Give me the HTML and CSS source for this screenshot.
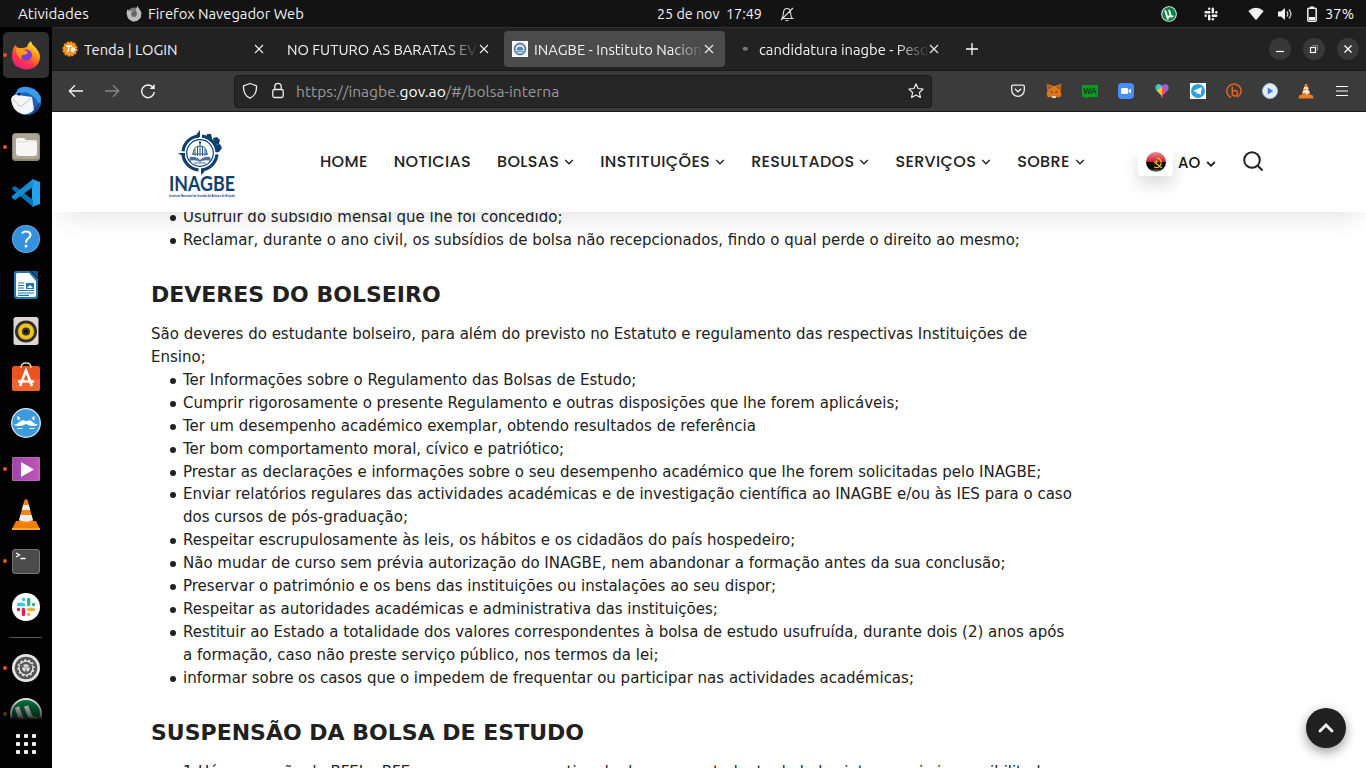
FILE: index.html
```html
<!DOCTYPE html>
<html lang="pt">
<head>
<meta charset="utf-8">
<title>INAGBE - Instituto Nacional de Gestão de Bolsas de Estudo</title>
<link rel="stylesheet" href="styles.css">
</head>
<body>
<header class="topbar">
  <span class="activities">Atividades</span>
  <svg class="app-icon" width="16" height="16" viewBox="0 0 28 28"><circle cx="14" cy="15" r="12.500" fill="#777"/><path d="M2 6l5 3 6-1-3 5 4 4 5-4-2-7 3-6 3 5 4 6-1 9-6 6-8 1-8-5-3-9z" fill="#bcbcbc"/><circle cx="14" cy="14" r="5" fill="#666"/></svg>
  <span class="app-name">Firefox Navegador Web</span>
  <div class="clock"><span class="date">25 de nov</span><span class="time">17:49</span>
    <svg width="16" height="16" viewBox="0 0 16 16" fill="none" stroke="#ddd" stroke-width="1.100"><path d="M2.500 12.500h11c-1.500-1-1.700-2.500-1.900-5.500-.2-3-1.600-4.500-3.600-4.500s-3.400 1.500-3.600 4.500c-.2 3-.4 4.500-1.900 5.500M6.500 14.500h3M2 14L14 2"/></svg>
  </div>
  <div class="status">
    <svg width="16" height="16" viewBox="0 0 16 16"><circle cx="8" cy="8" r="7.800" fill="#fff"/><circle cx="8" cy="8" r="6.900" fill="#0b8043"/><path d="M4 4.300l1.700 4.800q.8 2 2.600 1.500 1.500-.5 1-2.300L8 4M9.400 9.500q.8 1.500 3 .5M5.600 9l1.500 4.500" fill="none" stroke="#fff" stroke-width="1.900"/></svg>
    <svg class="s-slack" width="14" height="14" viewBox="0 0 14 14" fill="#f2f2f2"><rect x="4" y=".5" width="2.400" height="2.400" rx="1.200"/><rect x=".5" y="4" width="5.900" height="2.400" rx="1.200"/><rect x="7.600" y=".5" width="2.400" height="5.900" rx="1.200"/><rect x="11.100" y="4" width="2.400" height="2.400" rx="1.200"/><rect x=".5" y="7.600" width="2.400" height="2.400" rx="1.200"/><rect x="4" y="7.600" width="2.400" height="5.900" rx="1.200"/><rect x="7.600" y="7.600" width="5.900" height="2.400" rx="1.200"/><rect x="7.600" y="11.100" width="2.400" height="2.400" rx="1.200"/></svg>
    <svg class="s-wifi" width="16" height="14" viewBox="0 0 16 14"><path d="M.3 4Q8-2.600 15.700 4L8 13.300z" fill="#f2f2f2"/></svg>
    <svg class="s-vol" width="16" height="14" viewBox="0 0 16 14"><path d="M1 4.500h3L8 1v12L4 9.500H1z" fill="#f2f2f2"/><path d="M9.800 4.500q2 2.500 0 5M12 2.500q3.800 4.500 0 9" fill="none" stroke="#ccc" stroke-width="1.300"/></svg>
    <svg class="s-bat" width="10" height="16" viewBox="0 0 10 16"><path d="M3 .5h4v2H3zM2 11h6v3H2z" fill="#f2f2f2"/><rect x=".8" y="2.300" width="8.400" height="12.900" rx="1" fill="none" stroke="#f2f2f2" stroke-width="1.500"/></svg>
    <span class="pct">37%</span>
  </div>
</header>
<div class="desktop">
<nav class="dock">
  <div class="cell focused running"><svg width="28" height="30" viewBox="0 0 28 30"><defs><linearGradient id="ff" x1=".8" y1="0" x2=".2" y2="1"><stop offset="0" stop-color="#fff44f"/><stop offset=".35" stop-color="#ff980e"/><stop offset=".65" stop-color="#ff3b47"/><stop offset="1" stop-color="#e31587"/></linearGradient></defs><path d="M1 9l2-4 3 3 5 0 4-1q1-4 4-6l1 3 4 4q4 5 4 9-1 12-14 12.500Q0 28 0 16q0-4 1-7z" fill="url(#ff)"/><circle cx="14.500" cy="15" r="5.500" fill="#7a3bd8"/><path d="M4 8q5-1 8 2l4 2q-1 3-5 3-3 0-1 4-6-2-6-11z" fill="#ff9a1a"/></svg></div>
  <div class="cell"><svg width="32" height="32" viewBox="0 0 32 32"><circle cx="17" cy="16" r="14" fill="#1d62b7"/><path d="M8 4q6-4 12-1 8 2 11 10l-1 9q-3-10-12-14-5-2-13 2z" fill="#3c9be8"/><path d="M1 14q2-5 7-4l14 2 2 13q-5 5-12 4Q2 26 1 14z" fill="#f6f6f8"/><path d="M3 14q7 9 9 7l9-8" fill="none" stroke="#b8c0d0"/><circle cx="9" cy="9" r="1.500" fill="#113"/><path d="M22 29q8-3 8-12l-5 6z" fill="#124089"/></svg></div>
  <div class="cell running"><svg width="28" height="28" viewBox="0 0 28 28"><rect width="28" height="28" rx="3.500" fill="#8f8977"/><rect x="1" y="1" width="26" height="25" rx="3" fill="#aaa594"/><path d="M4 7q0-2 2-2h6l2 2h8q3 0 3 3v10q0 3-3 3H7q-3 0-3-3z" fill="#f8f7f5"/><path d="M5 9h8l2-1h8" fill="none" stroke="#d8d5cc"/></svg></div>
  <div class="cell"><svg width="28" height="28" viewBox="0 0 28 28"><path d="M20 0l8 3v22l-8 3z" fill="#24a4ec"/><path d="M0 9l3-2 18 14v7L0 10z" fill="#0072b9"/><path d="M0 19l3 2L21 8V0L0 17z" fill="#168bd2"/></svg></div>
  <div class="cell"><svg width="28" height="28" viewBox="0 0 28 28"><circle cx="14" cy="14" r="14" fill="#6db6ef"/><circle cx="14" cy="14" r="13.200" fill="#3591dc"/><path d="M10 8.500q1-2 4-2 4.500 0 4.500 3.500 0 2-2.500 3.700-2 1.300-2 4" fill="none" stroke="#fff" stroke-width="2"/><circle cx="14" cy="21" r="1.500" fill="#fff"/></svg></div>
  <div class="cell"><svg width="26" height="28" viewBox="0 0 26 28"><path d="M3 0h14l8 8v17q0 3-3 3H4q-3 0-3-3V2q0-2 2-2z" fill="#1c79ae"/><path d="M4 2h12l7 8v14q0 2-2 2H5q-2 0-2-2V3z" fill="#fff"/><path d="M18 0h6q1 0 1 1v6z" fill="#0c5a8c"/><path d="M5 12h6M5 14.500h6M5 17h6M5 19.500h16M5 22h16M5 24.300h11" stroke="#1c79ae" stroke-width="1.200"/><path d="M13 12h8v6h-8z" fill="#1c79ae"/><path d="M14 17l3-3 3 3z" fill="#fff"/></svg></div>
  <div class="cell"><svg width="26" height="28" viewBox="0 0 26 28"><rect x=".5" width="25" height="28" rx="2.500" fill="#dcd8cf"/><circle cx="13" cy="14.500" r="11" fill="#282828"/><circle cx="13" cy="14.500" r="9.300" fill="#444"/><circle cx="13" cy="14.500" r="8" fill="#f5c211"/><circle cx="13" cy="14.500" r="4" fill="#333"/><circle cx="13" cy="14.500" r="2" fill="#111"/></svg></div>
  <div class="cell"><svg width="28" height="30" viewBox="0 0 28 30"><rect y="4" width="28" height="25" rx="2.500" fill="#e95420"/><path d="M0 17h28v9q0 3-3 3H3q-3 0-3-3z" fill="#f0642f"/><path d="M9 6q0-5 5-5t5 5" fill="none" stroke="#e8d4a8" stroke-width="1.600"/><path d="M8 24l6-15.500L20 24M6 19.500h16" fill="none" stroke="#fff" stroke-width="2.600"/></svg></div>
  <div class="cell"><svg width="30" height="30" viewBox="0 0 30 30"><circle cx="15" cy="15" r="14.300" fill="#3c9bdc" stroke="#d9e9f5" stroke-width="1.300"/><path d="M3 16.500q3 0 6-3 3-2.500 6 0 3-2.500 6 0 3 3 6 3-2 2-5 1.500-4 0-7-2-3 2-7 2-3 .5-5-1.500z" fill="#fff"/><path d="M7 8.500v3.500l2-1.500zM23 8.500v3.500l-2-1.500zM6.500 20.500h5M18.500 20.500h5" fill="#fff" stroke="#fff"/></svg></div>
  <div class="cell running"><svg width="28" height="24" viewBox="0 0 28 24"><defs><linearGradient id="vp"><stop offset="0" stop-color="#9c45a8"/><stop offset="1" stop-color="#c257b6"/></linearGradient></defs><rect width="28" height="24" rx="2.500" fill="url(#vp)" stroke="#d489cf" stroke-width=".7"/><path d="M9 5l13 7.500L9 20z" fill="#fff"/></svg></div>
  <div class="cell"><svg width="28" height="32" viewBox="0 0 28 32"><path d="M4 22h20l4 8H0z" fill="#f07c00"/><path d="M0 29h28v2H0z" fill="#ffa331"/><path d="M12.500 1q1.500-1.500 3 0l6 22q-7.500 5-15 0z" fill="#f48511"/><path d="M11.200 6h5.600l1.400 5h-8.400zM8.500 16h11l1.400 5q-7 3.500-13.800 0z" fill="#ececec"/></svg></div>
  <div class="cell running"><svg width="28" height="25" viewBox="0 0 28 25"><rect x=".5" y=".5" width="27" height="24" rx="2.500" fill="#4b4b4b" stroke="#777"/><path d="M4 4l3.500 2L4 8M8.500 9.500h5" fill="none" stroke="#fff" stroke-width="1.300"/></svg></div>
  <div class="cell"><svg width="28" height="28" viewBox="0 0 28 28"><circle cx="14" cy="14" r="14" fill="#fff"/><g fill="none" stroke-width="3.400" stroke-linecap="round"><path d="M11.500 6.500h.2M6.500 11.500h5" stroke="#36c5f0"/><path d="M16.700 6.500v5M21.500 11.500h.1" stroke="#2eb67d"/><path d="M16.700 16.500h4.800M16.700 21.300v.1" stroke="#ecb22e"/><path d="M11.500 16.500v5M6.500 16.500h.1" stroke="#e01e5a"/></g></svg></div>
  <hr class="dock-sep">
  <div class="cell running"><svg width="28" height="28" viewBox="0 0 28 28"><circle cx="14" cy="14" r="14" fill="#e4e4e4"/><circle cx="14" cy="14" r="10" fill="none" stroke="#555" stroke-width="2.500"/><circle cx="14" cy="14" r="8.500" fill="none" stroke="#555" stroke-width="2" stroke-dasharray="2.200 2.250"/><circle cx="14" cy="14" r="5" fill="none" stroke="#555" stroke-width="2.500"/><circle cx="14" cy="14" r="2" fill="#bbb"/><path d="M14 16v5M12 13l-4.500-2.700M16 13l4.500-2.700" stroke="#666" stroke-width="1.500"/></svg></div>
  <div class="cell running faded"><svg width="32" height="32" viewBox="0 0 32 32"><circle cx="16" cy="16" r="15" fill="#06713c" stroke="#ddd" stroke-width="2"/><path d="M7 9l3 9q3 6 8 4M16 8l4 10q2 4 8 3" fill="none" stroke="#ddd" stroke-width="4.500"/></svg></div>
  <div class="apps"><i></i><i></i><i></i><i></i><i></i><i></i><i></i><i></i><i></i></div>
</nav>
<main class="window">
  <div class="tabs">
    <div class="tab"><svg class="fav" width="16" height="16" viewBox="0 0 16 16"><circle cx="8" cy="8" r="6.800" fill="#f7941d"/><circle cx="8" cy="8" r="6.800" fill="none" stroke="#f7941d" stroke-width="1.800" stroke-dasharray="2.200 1.360"/><path d="M4 5h6M7 5l-1 6M9.500 9h3q0-2-1.500-2t-1.500 2 2.500 1.700" fill="none" stroke="#fff" stroke-width="1.500"/></svg><span class="title">Tenda | LOGIN</span><svg width="10" height="10" viewBox="0 0 10 10"><path d="M1 1l8 8M9 1L1 9" stroke="#eee" stroke-width="1.100"/></svg></div>
    <div class="tab"><span class="title fade">NO FUTURO AS BARATAS EV</span><svg width="10" height="10" viewBox="0 0 10 10"><path d="M1 1l8 8M9 1L1 9" stroke="#eee" stroke-width="1.100"/></svg></div>
    <div class="tab active"><svg class="fav" width="16" height="16" viewBox="0 0 16 16"><path d="M0 0h16v16H0z" fill="#fff"/><circle cx="8" cy="8" r="5.500" fill="#dbe6f0" stroke="#5b83ab" stroke-width="1.800"/><path d="M5 9q0-3 3-3t3 3zM5 10.500h6" fill="#5b83ab" stroke="#5b83ab" stroke-width=".8"/></svg><span class="title fade">INAGBE - Instituto Nacion</span><svg width="10" height="10" viewBox="0 0 10 10"><path d="M1 1l8 8M9 1L1 9" stroke="#eee" stroke-width="1.100"/></svg></div>
    <div class="tab"><svg class="fav" width="16" height="16" viewBox="0 0 16 16"><ellipse cx="8.300" cy="7.700" rx="2.600" ry="2" fill="#777"/></svg><span class="title fade">candidatura inagbe - Pesq</span><svg width="10" height="10" viewBox="0 0 10 10"><path d="M1 1l8 8M9 1L1 9" stroke="#eee" stroke-width="1.100"/></svg></div>
    <svg class="plus" width="12" height="12" viewBox="0 0 12 12"><path d="M6 0v12M0 6h12" stroke="#fff" stroke-width="1.300"/></svg>
    <div class="controls">
      <span><svg width="10" height="10" viewBox="0 0 10 10"><path d="M1 7.500h8" stroke="#fff" stroke-width="1.200"/></svg></span>
      <span><svg width="10" height="10" viewBox="0 0 10 10" fill="none"><path d="M3.500 1.500h5v5" stroke="#888"/><rect x="1.500" y="3.500" width="5" height="5" stroke="#fff" stroke-width="1.200"/></svg></span>
      <span><svg width="10" height="10" viewBox="0 0 10 10"><path d="M1.500 1.500l7 7M8.500 1.500l-7 7" stroke="#fff" stroke-width="1.300"/></svg></span>
    </div>
  </div>
  <div class="toolbar">
    <span class="tool"><svg width="16" height="16" viewBox="0 0 16 16" fill="none" stroke="#f5f5f5" stroke-width="1.300"><path d="M15 8H1.500M7 2.300L1.300 8 7 13.700"/></svg></span>
    <span class="tool"><svg width="16" height="16" viewBox="0 0 16 16" fill="none" stroke="#868686" stroke-width="1.300"><path d="M1 8h13.500M9 2.300L14.700 8 9 13.700"/></svg></span>
    <span class="tool"><svg width="16" height="16" viewBox="0 0 16 16" fill="none" stroke="#f5f5f5" stroke-width="1.400"><path d="M14.300 9A6.300 6.300 0 1 1 12.600 4"/><path d="M14.700 1v5H9.700z" fill="#f5f5f5" stroke="none"/></svg></span>
    <div class="url">
      <svg width="16" height="18" viewBox="0 0 16 18" fill="none" stroke="#eee" stroke-width="1.300"><path d="M8 1.500l6.500 2.300c.3 6-1.500 10-6.500 12.400C3 13.800 1.200 9.800 1.500 3.800z" stroke-linejoin="round"/></svg>
      <svg class="lock" width="12" height="17" viewBox="0 0 12 17" fill="none" stroke="#eee" stroke-width="1.300"><rect x=".8" y="7.500" width="10.400" height="8" rx="1.500"/><path d="M2.800 7.500V4.500a3.200 3.200 0 0 1 6.400 0v3"/></svg>
      <span class="addr">https://inagbe.<b>gov.ao</b>/#/bolsa-interna</span>
      <svg class="star" width="16" height="16" viewBox="0 0 16 16" fill="none" stroke="#eee" stroke-width="1.200" stroke-linejoin="round"><path d="M8 .9l2.100 4.600 5 .6-3.700 3.400 1 5L8 12l-4.400 2.500 1-5L.9 6.100l5-.6z"/></svg>
    </div>
    <div class="exts">
      <span class="tool"><svg width="14" height="14" viewBox="0 0 14 14" fill="none" stroke="#eee" stroke-width="1.300"><path d="M2 1.200h10q1.300 0 1.300 1.300V6A6.300 6.300 0 0 1 .7 6V2.500Q.7 1.200 2 1.200z"/><path d="M3.800 4.800L7 7.800l3.200-3"/></svg></span>
      <span class="tool"><svg width="16" height="16" viewBox="0 0 16 16"><path d="M.5.500L7 3h2L15.500.5l-1 7.500 1 3.500-1.500 3-3-.8-1.500 1.500h-3L5 13.700l-3 .8-1.500-3 1-3.500z" fill="#d9771f"/><path d="M1 1l5 3.500-3.500 2.300zM15 1l-5 3.500 3.500 2.300z" fill="#a9581c"/><path d="M6 13h4l-.5 2h-3z" fill="#ddd"/><path d="M4.500 8.500l2 1M11.500 8.500l-2 1" stroke="#333"/></svg></span>
      <span class="tool"><span class="wa">WA</span></span>
      <span class="tool"><svg width="16" height="16" viewBox="0 0 16 16"><rect width="16" height="16" rx="4" fill="#4a8cff"/><rect x="3" y="5" width="7" height="6" rx="1.300" fill="#fff"/><path d="M10.500 7.300L13 5.500v5l-2.500-1.800z" fill="#fff"/></svg></span>
      <span class="tool"><svg width="16" height="16" viewBox="0 0 16 16"><path d="M8 3Q6 0 3 1.500 0 4 2 7l6 6z" fill="#36c5c0"/><path d="M8 3q2-3 5-1.500Q16 4 14 7l-6 6z" fill="#a05bd6"/><path d="M8 3v10L3 8z" fill="#f5c22b"/><path d="M8 4.500l4.500 4L8 13z" fill="#ef4d62"/><path d="M7 13h2v2H7z" fill="#b3473c"/></svg></span>
      <span class="tool"><svg width="16" height="16" viewBox="0 0 16 16"><path d="M0 0h16v16H0z" fill="#fff"/><circle cx="8" cy="8" r="7" fill="#2ba0da"/><path d="M3 8l9-4-1.500 8-2.500-2-1.500 1.500V9z" fill="#fff"/></svg></span>
      <span class="tool"><svg width="16" height="16" viewBox="0 0 16 16" fill="none" stroke="#ee6123" stroke-width="1.500"><path d="M5 14.500A7.100 7.100 0 1 1 11.500 14.200M6.300 3.500v9M6.300 9.500q.5-2 2.700-2 2.500 0 2.500 2.800T9 13q-2.500 0-2.700-2.500"/></svg></span>
      <span class="tool"><svg width="16" height="16" viewBox="0 0 16 16"><circle cx="8" cy="8" r="7.500" fill="#e6ecf4" stroke="#a9c2e8"/><path d="M5.800 4.500l5.500 3.500-5.500 3.500z" fill="#3c7be0"/></svg></span>
      <span class="tool"><svg width="16" height="16" viewBox="0 0 16 16"><path d="M7 1h2l3.500 11h2l1.200 3.500H.3L1.500 12h2z" fill="#ee7d23"/><path d="M6.200 4h3.600l.8 2H5.400zM5.500 7H8V5.500L12 9l-4 3v-2H4.600z" fill="#f3e9e0"/></svg></span>
      <span class="tool"><svg width="12" height="12" viewBox="0 0 12 12" stroke="#fff" stroke-width="1.200"><path d="M0 1.500h12M0 6h12M0 10.500h12"/></svg></span>
    </div>
  </div>
  <section class="page">
    <header class="site-head">
      <svg class="logo" width="68" height="70" viewBox="0 0 68 70">
        <g fill="none" stroke="#0f4070"><circle cx="31" cy="23" r="17" stroke-width="3.200" stroke-dasharray="23.700 3" stroke-dashoffset="-1.500"/><circle cx="31" cy="23" r="13.300" stroke-width="1.200"/></g>
        <path d="M31 0v7l-5 1q2-5 5-8zM9 23h7v4q-3-1-7-4zM32 45v-6l5-1q-1 4-5 7zM38 4l4 0 1 4-2 2-4-2zM44 8l4-1 3 3-1 4-4 1zM47 15l4-1 2 4-3 4-3-1z" fill="#0f4070"/>
        <path d="M24 25q0-9 7-9t7 9M31 13v3M26 19v7M28.500 17v9M31 16v10M33.500 17v9M36 19v7M23 24h16" fill="none" stroke="#285886" stroke-width="1"/>
        <path d="M21 27q6-1 10 3 4-4 10-3l1 4q-7-2-11 1-4-3-11-1z" fill="#4c7299"/><path d="M25 33h12" stroke="#4c7299"/>
        <path d="M30 11.500h2v2h-2z" fill="#0f4070"/>
        <text class="logo-name" x="0" y="60.500" textLength="66" lengthAdjust="spacingAndGlyphs">INAGBE</text>
        <text class="logo-sub" x="0" y="66.500" textLength="66" lengthAdjust="spacingAndGlyphs">Instituto Nacional de Gestão de Bolsas de Estudo</text>
      </svg>
      <nav class="menu">
        <span>HOME</span>
        <span>NOTICIAS</span>
        <span>BOLSAS<svg class="chev" viewBox="0 0 10 6"><path d="M1.200 1L5 4.800 8.800 1"/></svg></span>
        <span>INSTITUIÇÕES<svg class="chev" viewBox="0 0 10 6"><path d="M1.200 1L5 4.800 8.800 1"/></svg></span>
        <span>RESULTADOS<svg class="chev" viewBox="0 0 10 6"><path d="M1.200 1L5 4.800 8.800 1"/></svg></span>
        <span>SERVIÇOS<svg class="chev" viewBox="0 0 10 6"><path d="M1.200 1L5 4.800 8.800 1"/></svg></span>
        <span>SOBRE<svg class="chev" viewBox="0 0 10 6"><path d="M1.200 1L5 4.800 8.800 1"/></svg></span>
      </nav>
      <div class="lang">
        <span class="flag"><svg width="20" height="20" viewBox="0 0 20 20"><defs><linearGradient id="fl" x2="0" y2="1"><stop offset="0" stop-color="#e58a95"/><stop offset=".3" stop-color="#dc4a5a"/><stop offset=".5" stop-color="#d4182c"/><stop offset=".5" stop-color="#000"/><stop offset=".85" stop-color="#111"/><stop offset="1" stop-color="#999"/></linearGradient></defs><circle cx="10" cy="10" r="10" fill="url(#fl)"/><path d="M11 6q5 1 4 6-2 5-7 3M8 10l8 6M10 8l1 3" fill="none" stroke="#e8c21c" stroke-width="1.200"/></svg></span>
        <span class="lang-code">AO</span>
        <svg class="chev strong" viewBox="0 0 10 6"><path d="M1.200 1L5 4.800 8.800 1"/></svg>
      </div>
      <svg class="search" width="21" height="21" viewBox="0 0 21 21" fill="none" stroke="#222" stroke-width="2"><circle cx="9" cy="9" r="7.800"/><path d="M14.500 14.500l5 5"/></svg>
    </header>
    <article class="content">
      <ul>
        <li>Usufruir do subsídio mensal que lhe foi concedido;</li>
        <li>Reclamar, durante o ano civil, os subsídios de bolsa não recepcionados, findo o qual perde o direito ao mesmo;</li>
      </ul>
      <h2>DEVERES DO BOLSEIRO</h2>
      <p>São deveres do estudante bolseiro, para além do previsto no Estatuto e regulamento das respectivas Instituições de<br>Ensino;</p>
      <ul>
        <li>Ter Informações sobre o Regulamento das Bolsas de Estudo;</li>
        <li>Cumprir rigorosamente o presente Regulamento e outras disposições que lhe forem aplicáveis;</li>
        <li>Ter um desempenho académico exemplar, obtendo resultados de referência</li>
        <li>Ter bom comportamento moral, cívico e patriótico;</li>
        <li>Prestar as declarações e informações sobre o seu desempenho académico que lhe forem solicitadas pelo INAGBE;</li>
        <li>Enviar relatórios regulares das actividades académicas e de investigação científica ao INAGBE e/ou às IES para o caso<br>dos cursos de pós-graduação;</li>
        <li>Respeitar escrupulosamente às leis, os hábitos e os cidadãos do país hospedeiro;</li>
        <li>Não mudar de curso sem prévia autorização do INAGBE, nem abandonar a formação antes da sua conclusão;</li>
        <li>Preservar o património e os bens das instituições ou instalações ao seu dispor;</li>
        <li>Respeitar as autoridades académicas e administrativa das instituições;</li>
        <li>Restituir ao Estado a totalidade dos valores correspondentes à bolsa de estudo usufruída, durante dois (2) anos após<br>a formação, caso não preste serviço público, nos termos da lei;</li>
        <li>informar sobre os casos que o impedem de frequentar ou participar nas actividades académicas;</li>
      </ul>
      <h2>SUSPENSÃO DA BOLSA DE ESTUDO</h2>
      <ul class="plain"><li>1-Há suspensão da BFEI e BFE, sempre que por motivo de doença o estudante da bolsa interna seja impossibilitado</li></ul>
    </article>
    <button class="to-top" aria-label="Topo"><svg width="18" height="12" viewBox="0 0 18 12"><path d="M3 9l6-6 6 6" fill="none" stroke="#fff" stroke-width="2.800" stroke-linecap="round"/></svg></button>
  </section>
</main>
</div>
</body>
</html>
```
FILE: styles.css
```css
* { box-sizing: border-box; }
body {
  margin: 0; width: 1366px; height: 768px; overflow: hidden;
  display: flex; flex-direction: column;
  font: 14.75px/20px Ubuntu, "Noto Sans", sans-serif; color: #f2f2f2; background: #000;
  white-space: nowrap;
}
svg { display: block; flex: none; }
.topbar { height: 27px; flex: none; background: #131313; display: grid; grid-template-columns: 126px 22px 509px 504px 1fr; align-items: center; }
.activities { padding-left: 18px; font-size: 15.1px; }
.clock { display: flex; align-items: center; font-size: 14.3px; }
.date { width: 69px; }
.time { width: 53px; }
.status { display: flex; align-items: center; }
.s-slack { margin-left: 27px; }
.s-wifi { margin-left: 30px; }
.s-vol { margin-left: 13px; }
.s-bat { margin-left: 14px; }
.pct { margin-left: 8px; }
.desktop { flex: 1; display: flex; min-height: 0; }
.dock { width: 52px; flex: none; background: #020202; padding-top: 5px; display: flex; flex-direction: column; align-items: center; }
.cell { position: relative; width: 46px; height: 46px; flex: none; display: flex; align-items: center; justify-content: center; }
.focused { background: #303030; border-radius: 5px; }
.running::before { content: ""; position: absolute; left: 0; top: 21px; width: 4px; height: 4px; border-radius: 50%; background: #e95420; }
.dock-sep { width: 32px; height: 1px; border: 0; background: #555; margin: 7px 0; flex: none; }
.faded { height: 29px; overflow: hidden; align-items: flex-start; padding-top: 7px; -webkit-mask-image: linear-gradient(#000 30%, #0006 85%, transparent); mask-image: linear-gradient(#000 30%, #0006 85%, transparent); }
.apps { display: grid; grid-template-columns: repeat(3, 4px); gap: 4px; margin-top: 14px; }
.apps i { width: 4px; height: 4px; background: #f2f2f2; border-radius: 1px; }
.window { flex: 1; display: flex; flex-direction: column; min-width: 0; }
.tabs { height: 44px; flex: none; background: #222; border-top: 1px solid #303030; border-bottom: 1px solid #181818; padding: 0 7px 0 2px; display: flex; align-items: center; gap: 4px; }
.tab { width: 221px; height: 36px; flex: none; border-radius: 4px; padding: 0 11px 0 8px; display: flex; align-items: center; }
.active { background: #4b4b4b; }
.fav { margin-right: 6px; }
.title { flex: 1; overflow: hidden; min-width: 0; padding-top: 2px; }
.fade { -webkit-mask-image: linear-gradient(90deg, #000 calc(100% - 32px), transparent); mask-image: linear-gradient(90deg, #000 calc(100% - 32px), transparent); }
.plus { margin-left: 12px; }
.controls { margin-left: auto; display: flex; gap: 12px; }
.controls span { width: 22px; height: 22px; border-radius: 50%; background: #383838; display: flex; align-items: center; justify-content: center; }
.toolbar { height: 41px; flex: none; background: #3b3b3b; border-bottom: 1px solid #1b1b1b; display: flex; align-items: center; padding: 0 6px; }
.tool { width: 36px; display: flex; justify-content: center; flex: none; }
.url { width: 698px; height: 33px; margin-left: 68px; background: #262626; border: 1px solid #1a1a1a; border-radius: 4px; display: flex; align-items: center; padding: 0 7px; }
.lock { margin: 0 12px 1px 14px; }
.addr { color: #9a9a9a; font-size: 15.6px; padding-bottom: 1px; }
.addr b { font-weight: 400; color: #fff; }
.star { margin-left: auto; }
.exts { margin-left: auto; display: flex; align-items: center; }
.wa { position: relative; width: 16px; height: 12px; background: #0a9a22; color: #123a18; font: bold 8.500px/12px "Liberation Sans", sans-serif; text-align: center; }
.wa::after { content: ""; position: absolute; left: 3px; top: 12px; border-top: 2px solid #0a9a22; border-right: 4px solid transparent; }
.page { position: relative; flex: 1; background: #fff; overflow: hidden; color: #212121; min-height: 0; }
.site-head { position: relative; z-index: 1; height: 100px; background: #fff; box-shadow: 0 10px 30px -10px rgba(0,0,0,.16); display: flex; align-items: center; }
.logo { margin: 6px 0 0 117px; overflow: visible; }
.logo-name { font: 700 20px Lato, sans-serif; fill: #0f4070; }
.logo-sub { font: 700 3px "Liberation Sans", sans-serif; fill: #0f4070; }
.menu { display: flex; margin-left: 83px; gap: 26px; font: 500 16px/24px Poppins, Inter, sans-serif; letter-spacing: .33px; color: #222; width: 818px; }
.menu > span { display: flex; align-items: center; }
.chev { width: 10px; height: 6px; margin-left: 5px; fill: none; stroke: #222; stroke-width: 1.400; }
.lang { display: flex; align-items: center; font: 500 15px/24px Poppins, Inter, sans-serif; color: #111; }
.lang-code { padding-top: 2px; }
.flag { width: 35px; height: 28px; border-radius: 4px; background: #fff; box-shadow: 0 8px 16px rgba(0,0,0,.15); display: flex; align-items: center; justify-content: center; margin-right: 5px; }
.strong { stroke-width: 1.900; margin: 3px 0 0 6px; }
.search { margin: 0 0 1px 27px; }
.content { padding-left: 99px; margin-top: -6px; font: 15px/22.940px "DejaVu Sans", sans-serif; }
.content ul { margin: 0; padding: 0 0 0 32px; list-style: none; }
.content li { position: relative; }
.content li::before { content: ""; position: absolute; left: -13px; top: 9px; width: 6px; height: 6px; border-radius: 50%; background: #212121; }
.content .plain li::before { display: none; }
.content p { margin: 0; }
.content h2 { font: 700 22px/28px "DejaVu Sans", sans-serif; margin: 29px 0 14px; }
.content .plain { letter-spacing: -.03px; }
.to-top { position: absolute; right: 20px; bottom: 20px; width: 40px; height: 40px; border: 0; padding: 0; border-radius: 50%; background: #212121; box-shadow: 0 4px 12px rgba(0,0,0,.4); display: flex; align-items: center; justify-content: center; }
```
